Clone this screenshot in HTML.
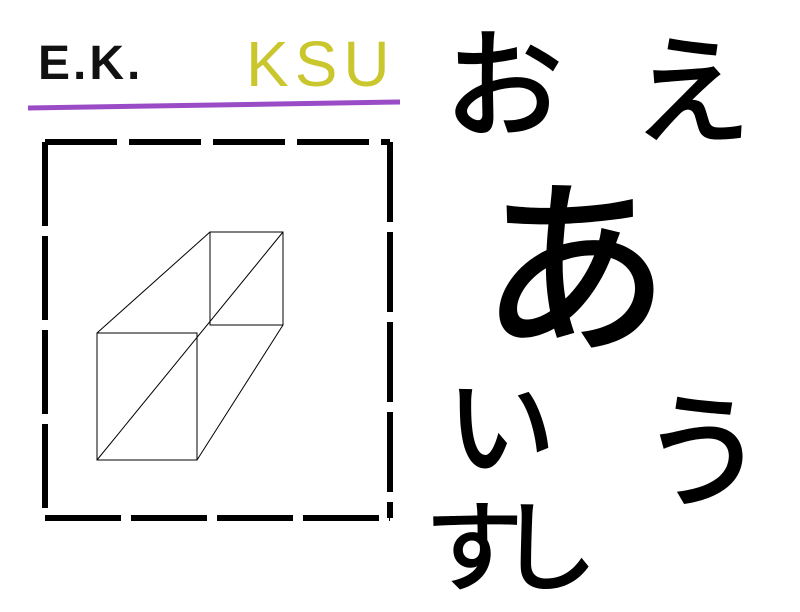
<!DOCTYPE html>
<html><head><meta charset="utf-8"><style>
html,body{margin:0;padding:0;background:#fff;}
body{width:800px;height:600px;position:relative;overflow:hidden;}
.t{position:absolute;line-height:1;font-family:"Liberation Sans","Noto Sans CJK JP",sans-serif;white-space:nowrap;}
.k{font-family:"Noto Sans CJK JP",sans-serif;font-weight:500;color:#000;}
</style></head><body>
<svg width="800" height="600" style="position:absolute;left:0;top:0">
<line x1="28" y1="108" x2="400" y2="102" stroke="#9a4cc6" stroke-width="5"/>
<g stroke="#000" stroke-width="6" fill="none">
<path d="M45 142 L390 142" stroke-dasharray="72 12"/>
<path d="M390 142 L390 518" stroke-dasharray="80 10"/>
<path d="M45 518 L390 518" stroke-dasharray="76 10"/>
<path d="M45 142 L45 518" stroke-dasharray="84 10"/>
</g>
<g stroke="#000" stroke-width="1" fill="none">
<rect x="97" y="333" width="100" height="127"/>
<rect x="210" y="232" width="73" height="93"/>
<line x1="97" y1="333" x2="210" y2="232"/>
<line x1="197" y1="460" x2="283" y2="325"/>
<line x1="97" y1="460" x2="283" y2="232"/>
</g>
</svg>
<div class="t" style="left:38px;top:40px;font-size:48px;color:#111;font-weight:700;letter-spacing:3px">E.K.</div>
<div class="t" style="left:246px;top:32px;font-size:64px;color:#c9c62e;letter-spacing:6px">KSU</div>
<div class="t k" style="left:444px;top:16px;font-size:120px">お</div>
<div class="t k" style="left:632px;top:22px;font-size:120px">え</div>
<div class="t k" style="left:480px;top:160px;font-size:190px">あ</div>
<div class="t k" style="left:446px;top:364px;font-size:110px">い</div>
<div class="t k" style="left:640px;top:380px;font-size:126px">う</div>
<div class="t k" style="left:424px;top:490px;font-size:100px;letter-spacing:-26px">すし</div>
</body></html>
